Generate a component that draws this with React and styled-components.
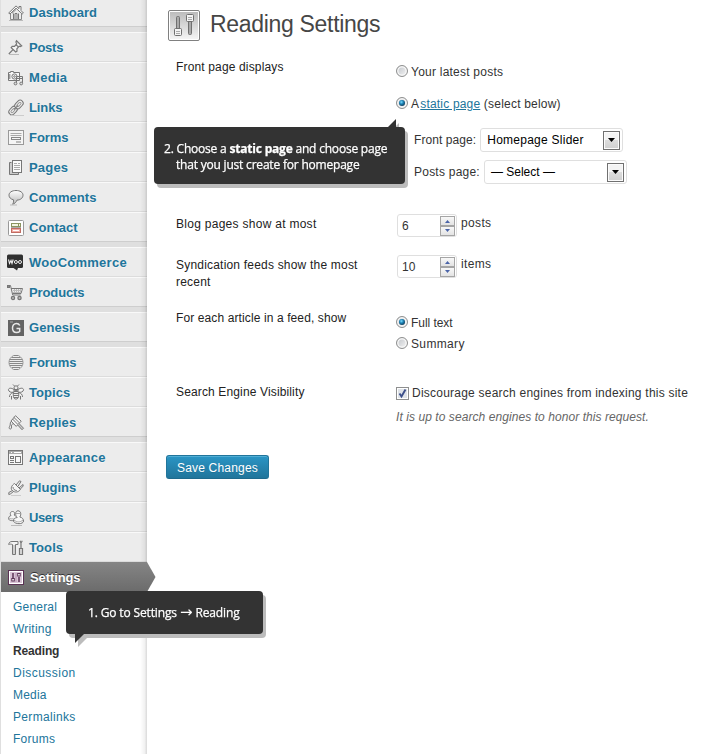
import React from 'react';
import styled, { createGlobalStyle } from 'styled-components';

const Global = createGlobalStyle`
  * { box-sizing: border-box; }
  body { margin: 0; background: #fff; color: #333; font: 12px/16px "Liberation Sans", Arial, sans-serif; overflow: hidden; }
`;

const Page = styled.div`display: flex; width: 728px; height: 754px; overflow: hidden; position: relative;`;

const Sidebar = styled.nav`
  position: relative; width: 147px; height: 754px; flex: none; background: #dfdfdf; border-left: 1px solid #dfdfdf;
  display: flex; flex-direction: column; gap: 5px;
`;
const SidebarEdge = styled.div`
  position: absolute; top: 0; right: 0; width: 7px; height: 754px;
  background: linear-gradient(to right, rgba(0,0,0,0), rgba(0,0,0,.05) 65%, rgba(0,0,0,.15));
`;
const Group = styled.div`margin-top: ${p => p.$first ? '-3px' : 0}; flex: none;`;
const Item = styled.div`
  height: 30px; display: flex; align-items: center; padding: 1px 0 0 7px; gap: 5px;
  background: #ececec; border-top: 1px solid #f9f9f9; border-bottom: 1px solid #dcdcdc;
  &:last-child { border-bottom-color: #cecece; }
  color: #21759b; font-size: 13px; font-weight: bold; letter-spacing: ${p => p.$ls || 0}px;
  text-shadow: 0 1px 0 rgba(255,255,255,.5);
`;
const Current = styled(Item)`
  position: relative; z-index: 2; color: #fff; text-shadow: 0 -1px 0 #333; border: 0;
  background: linear-gradient(#858585, #6b6b6b); gap: 6px;
`;
const CurrentArrow = styled.svg`position: absolute; left: 146px; top: 0; width: 9px; height: 30px;`;
const Icon = styled.svg`width: 16px; height: 16px; flex: none; overflow: visible; margin-top: 1px;`;
const Submenu = styled.div`height: 162px; background: #fff; padding: 4px 0 0 12px;`;
const SubItem = styled.div`
  height: 22px; line-height: 22px; letter-spacing: ${p => p.$ls}px;
  color: ${p => p.$on ? '#333' : '#21759b'}; font-weight: ${p => p.$on ? 'bold' : 'normal'};
`;

const Main = styled.main`flex: 1; padding: 9px 0 0 19px;`;
const Header = styled.header`display: flex; height: 34px; padding-left: 2px; gap: 10px;`;
const HeaderIcon = styled.svg`width: 32px; height: 32px; margin-top: 1px;`;
const Title = styled.h1`margin: 0; font-size: 23px; font-weight: normal; line-height: 30px; color: #464646; letter-spacing: -.31px;`;
const Row = styled.section`display: grid; grid-template-columns: 220px 1fr; height: ${p => p.$h}px; padding-left: 10px;`;
const Label = styled.div`color: #222; line-height: 17px; padding-top: ${p => p.$pt || 0}px;`;
const Field = styled.div`padding-top: ${p => p.$pt || 0}px;`;
const Line = styled.div`
  display: flex; align-items: center; height: ${p => p.$h}px; padding-left: ${p => p.$pl || 0}px; white-space: pre;
`;
const T = styled.span`letter-spacing: ${p => p.$ls || 0}px; white-space: pre;`;
const Unit = styled(T)`margin-top: -5px;`;
const Link = styled.a`color: #21759b; text-decoration: underline; letter-spacing: .18px;`;
const Note = styled.div`font-style: italic; color: #666; letter-spacing: .07px; line-height: 16px; padding-top: 7px;`;

const Radio = styled.span`
  width: 12px; height: 12px; border-radius: 50%; border: 1px solid #8e8f8f; margin: -2px 3px 0 0; flex: none;
  box-shadow: inset 0 0 0 1.5px #f6f6f6; display: grid; place-items: center;
  background: linear-gradient(135deg, #bfc3c8, #f6f6f6);
  &::after {
    content: ''; width: 6px; height: 6px; border-radius: 50%; display: ${p => p.$on ? 'block' : 'none'};
    background: radial-gradient(circle at 40% 35%, #7ddcff 0, #1f86b8 35%, #0b2d49 85%);
  }
`;
const Check = styled.svg`width: 13px; height: 13px; margin-right: 3px; flex: none;`;

const SelectBox = styled.div`
  width: 143px; height: 24px; border: 1px solid #dfdfdf; border-radius: 3px; margin-left: ${p => p.$ml}px;
  display: flex; align-items: center; justify-content: space-between; padding: 0 2px 0 6px; color: #000; background: #fff;
`;
const DropButton = styled.span`
  width: 17px; height: 19px; border: 1px solid #707070; background: linear-gradient(#f3f3f3 48%, #dcdcdc 50%, #cfcfcf);
  box-shadow: inset 0 0 0 1px #fbfbfb; display: grid; place-items: center;
`;
const NumberBox = styled.div`
  width: 60px; height: 23px; border: 1px solid #dfdfdf; border-radius: 3px; margin: 0 4px 0 1px;
  display: flex; align-items: center; justify-content: space-between; padding: 0 1px 0 4px;
`;
const Spinner = styled.span`display: grid; width: 15px; height: 20px;`;
const SpinButton = styled.span`
  border: 1px solid #a5a5a5; height: 10px; background: linear-gradient(#f8f8f8, #e3e3e3); display: grid; place-items: center;
`;
const Save = styled.button`
  width: 103px; height: 24px; padding: 1px 0 0; border: 1px solid #21759b; border-bottom-color: #1e6a8d; border-radius: 3px;
  background: linear-gradient(#2a95c5, #21759b); box-shadow: inset 0 1px 0 rgba(120,200,230,.5);
  color: #fff; font: 12px "Liberation Sans", Arial, sans-serif; letter-spacing: .2px; text-shadow: 0 1px 0 rgba(0,0,0,.1);
`;

const Callout = styled.div`
  position: absolute; z-index: 5; left: ${p => p.$x}px; top: ${p => p.$y}px; width: ${p => p.$w}px; height: ${p => p.$h}px;
  background: #333; border-radius: 4px; color: #fff; filter: drop-shadow(3px 4px 0 #bcbcbc);
  font: 12px/16px "Open Sans", "Noto Sans", sans-serif; padding: ${p => p.$pad}; white-space: pre;
  -webkit-text-stroke: .25px #fff;
`;
const CalloutLine = styled.div`letter-spacing: ${p => p.$ls}px; padding-left: ${p => p.$in || 0}px;`;
const Strong = styled.b`letter-spacing: -.2px;`;
const Arrow = styled.span`font: 15px/10px "DejaVu Sans", sans-serif; letter-spacing: 0; -webkit-text-stroke: 0;`;
const Tail = styled.svg`position: absolute; left: ${p => p.$x}px; top: ${p => p.$y}px; width: 10px; height: 10px;`;

const S = { fill: 'none', stroke: '#777', strokeWidth: 1 };
const icons = {
  dashboard: <g {...S}><path d="M.7 8 8 .9 11 3.7V1.5h2v4L15.4 8l-1.2 1L8 3.2 2 9Z" fill="#fafafa" /><path d="M2.5 9v5.5h11V9M8 4.5 4 8.3" stroke="#888" /><path d="M5.5 8.5V14M10.5 8.5V14M7 14V8.5h2V14" /><path d="M1 15.5h14" stroke="#bbb" /></g>,
  posts: <g {...S}><path d="m8.5.8 5.2 5-1.4.8-1.1-.4-2.3 2.600.1 2.400-1.300.800L3.200 7.600l1-1.200 2.300 0 2.200-2.600-.8-1.700Z" fill="#f5f5f5" strokeWidth="1.200" /><path d="M5 9.700.8 14M8 4.700l2.400 2.200" strokeWidth="1.200" /><path d="M1 14.500h10" stroke="#bbb" /></g>,
  media: <g {...S}><path d="M2.5 2.5v-1h3v1h6v8H.5v-8Z" fill="#f6f6f6" /><circle cx="6.5" cy="6.5" r="2.6" /><circle cx="6.5" cy="6.5" r=".8" /><path d="M1.8 4v5M8.5 13V6.5h6V13M8.5 8.5h6" /><circle cx="7.5" cy="13.5" r="1.4" fill="#ddd" /><circle cx="13.2" cy="13.5" r="1.4" fill="#ddd" /></g>,
  links: <g {...S}><g transform="rotate(-46 8 7.5)"><rect x="-1" y="4.5" width="9.5" height="6" rx="3" fill="#f5f5f5" /><rect x="1.2" y="6.4" width="5.2" height="2.2" rx="1.1" stroke="#999" /><rect x="7.5" y="4.5" width="9.5" height="6" rx="3" fill="#f5f5f5" /><rect x="9.6" y="6.4" width="5.2" height="2.2" rx="1.1" stroke="#999" /><path d="M5 7.5h6" /></g><path d="M2 15.5h14" stroke="#ccc" /></g>,
  forms: <g fill="none" stroke="#999"><rect x=".5" y=".5" width="15" height="14" fill="#f5f5f5" /><path d="M2.5 3.5h11M2.5 5.5h11" stroke="#aaa" /><rect x="3.5" y="7.5" width="9" height="2" stroke="#888" /><path d="M8 12h5" stroke="#bbb" strokeWidth="2" /></g>,
  pages: <g {...S}><path d="M3.5 2.5h-2v12h9v-2" fill="#ccc" stroke="#777" /><rect x="4.5" y=".5" width="9" height="12" fill="#fafafa" /><path d="M6 3.5h3M10 3.5h2M6 5.5h6M6 7.5h6M6 9.5h6" stroke="#aaa" /></g>,
  comments: <g {...S}><path d="M8 .5c4 0 7 1.8 7 4.7s-2.8 4.9-6 4.9c-1 2.2-2.5 3.7-4.5 4.2C5.5 13 5.8 11.5 5.5 9.8 2.8 9.2 1 7.5 1 5.2 1 2.3 4 .5 8 .5Z" fill="url(#bubble)" /><path d="M2 15h7" stroke="#bbb" /></g>,
  contact: <g fill="none"><rect x=".5" y=".5" width="15" height="15" rx="1" fill="#fff" stroke="#999" /><rect x="3.5" y="3.5" width="9" height="3" stroke="#8b9460" fill="#f3f5e4" /><path d="M10.5 3.5v3" stroke="#8b9460" /><rect x="3.5" y="8.5" width="9" height="4" stroke="#c06c62" fill="#efaaa4" /><path d="M5 10.5h6" stroke="#fff" /><path d="M3 7.5h10" stroke="#aaa" /></g>,
  woo: <g><rect x="-1" y="-.5" width="16" height="13.5" rx="1.5" fill="#303030" /><path d="M5.5 13H10l-1 2.5Z" fill="#303030" /><path d="m.5 4.500 1 4 1.500-3 1 3 1.200-4" fill="none" stroke="#eee" strokeWidth="1.1" /><circle cx="7.9" cy="7" r="1.5" fill="none" stroke="#eee" /><circle cx="12" cy="7" r="1.5" fill="none" stroke="#eee" /></g>,
  products: <g {...S}><path d="M-.5.5h3l2.200 9.500h8M3 3.500h11.500l-1.500 5H4.500" /><path d="M5 5.500h8.500M5 7.500h8M6.500 4v4M8.500 4v4M10.500 4v4M12.500 4v4" stroke="#bbb" /><rect x="-.5" y=".5" width="2" height="2" fill="#888" /><circle cx="5" cy="13" r="1.6" fill="#bbb" strokeWidth="1.3" /><circle cx="11.5" cy="13" r="1.6" fill="#bbb" strokeWidth="1.3" /></g>,
  genesis: <g><rect width="16" height="16" fill="#646464" /><path d="M11.8 5.5C11 3.9 9.9 3.5 8.5 3.5 5.900 3.500 4.500 5.500 4.500 8s1.500 4.500 4 4.500c1.300 0 2.400-.3 3.200-1V8.500H8.500" fill="none" stroke="#e8e8e8" strokeWidth="1.5" /><path d="M2 2h3" stroke="#aaa" /></g>,
  forums: <g {...S}><path d="M5.5.5h5M3.500 2.500h9M1.500 4.500h13M1 6.500h14M1 8.500h14M2 10.500h12M4 12.500h8M5.500 14.500h5" stroke="#888" /><path d="M5.5.5C3 2 1 4 1 7.500s2 5.500 4.500 7M10.500.5C13 2 15 4 15 7.500s-2 5.500-4.500 7" stroke="#999" /></g>,
  topics: <g {...S}><circle cx="8" cy="2.8" r="2" /><path d="M6.500 1 5-.5M9.500 1 11-.5" /><path d="M6 4.500C3 2.500.5 3 .5 4.800S3 8 6 7M10 4.500c3-2 5.500-1.500 5.500.3S13 8 10 7M5.500 7.500C3 8 1.500 9.500 1.500 12M10.500 7.500c2.500.5 4 2 4 4.500" fill="#f5f5f5" /><ellipse cx="8" cy="9.800" rx="2.700" ry="4.300" fill="#eee" /><path d="M5.500 8.500h5M5.500 10.500h5M6 12.500h4M6 4.500h4v2H6zM3.500 11v3.500M12.500 11v3.500" /></g>,
  replies: <g {...S}><path d="m7.500.7 5.700 5.500-5 5.200L3 6Z" fill="#f5f5f5" /><path d="m5.800 2.300 5.600 5.500M4.500 4l5.500 5.600" /><path d="m11 8.500 4.500 4.700-1.500 1.500L9.700 10" fill="#ccc" /><path d="M3 6.500C1.500 8.500 3 9.500 1.500 11.500c-1.500 3 2.500 3.500 2 .5-.5-1.500.5-3.500 2-3" /></g>,
  appearance: <g {...S}><rect x=".5" y=".5" width="14" height="14" fill="#f8f8f8" /><path d="M1 2.500h13" stroke="#aaa" strokeWidth="3" /><path d="M3 2.500h1M6 2.500h7" stroke="#fff" /><rect x="7.500" y="6.500" width="5" height="6" /><rect x="2.500" y="6.500" width="3" height="2" /><path d="M2 10.500h4M2 12.500h4" /></g>,
  plugins: <g {...S}><path d="m6.500 3.500 6 6c-2 2.700-5.500 3.500-8.200 1C2 8.500 4 5 6.500 3.500Z" fill="#f5f5f5" /><path d="m8 5 3.500-4.200 1.500.7-3 4.800M11 8l4-3.500.2 1.500-3 3.200M5 7c0 2 1.500 3.500 3.800 3.500M4.500 10.500.8 12.500l0 2 1.500-.5 3.500-2.700" /><path d="M3 15.500h10" stroke="#ccc" /></g>,
  users: <g {...S}><path d="M7.500 10C5.500 11 .5 11 .5 8.500.5 7 1.500 6 3 5.500 1.500 3.500 2.500 1.500 4.500 1.500S7 3 6.300 5l1.500 1.500" fill="#f5f5f5" /><path d="M9.200 7.500C7 5.500 7 .8 10 .8s3.500 4 1.800 6.200c2.500.5 3.700 2 3.700 4 0 3.500-8.500 3.500-10 .2C5 9 7 7.800 9.200 7.500Z" fill="#f8f8f8" /><path d="M8 3.500h4.500M6 10c3 2.500 6 2.500 9 0M1 8c2 1 3 1 4.500.5" stroke="#aaa" /><path d="M3 15.500h11" stroke="#bbb" /></g>,
  tools: <g {...S}><path d="M.7 4.500C1 2.500 2 1.500 4 1.500h6v3H7.500v10h-3v-10C3 4 2 4 .7 4.500Z" fill="#f3f3f3" /><path d="M6 5v9" stroke="#aaa" /><path d="M11.500 8.500h3v6h-3zM13 8.500V3L12 .8M13 3l1.300-2.200" strokeWidth="1.2" fill="#ddd" /></g>,
  settings: <g fill="none"><rect x=".5" y=".5" width="15" height="14" fill="#d9c4d6" stroke="#5b3355" /><rect x="1.5" y="1.5" width="13" height="12" stroke="#fff" /><path d="M5 3v5M11 7v5" stroke="#5b3355" strokeWidth="1.5" /><rect x="3.800" y="8.500" width="2.500" height="2.500" stroke="#5b3355" fill="#fff" /><rect x="9.700" y="3.500" width="2.500" height="2.500" stroke="#5b3355" fill="#fff" /><path d="M8 3v9" stroke="#b391ae" /></g>,
};

const groups = [
  [['dashboard', 'Dashboard', .02]],
  [['posts', 'Posts', -.25], ['media', 'Media', .3], ['links', 'Links', -.1], ['forms', 'Forms', -.05], ['pages', 'Pages', .2], ['comments', 'Comments', .03], ['contact', 'Contact', .05]],
  [['woo', 'WooCommerce', .25], ['products', 'Products', -.12]],
  [['genesis', 'Genesis', .05]],
  [['forums', 'Forums', -.03], ['topics', 'Topics', .06], ['replies', 'Replies', .15]],
];
const lastGroup = [['appearance', 'Appearance', .22], ['plugins', 'Plugins', .06], ['users', 'Users', -.4], ['tools', 'Tools', .1]];
const subs = [['General', .2], ['Writing', .2], ['Reading', -.15, true], ['Discussion', .47], ['Media', .2], ['Permalinks', .33], ['Forums', .28]];

const MenuItem = ({ item: [icon, name, ls] }) => <Item $ls={ls}><Icon viewBox="0 0 16 16">{icons[icon]}</Icon>{name}</Item>;

const Select = ({ children, ml, ls }) => (
  <SelectBox $ml={ml}><T $ls={ls}>{children}</T>
    <DropButton><svg width="7" height="4" viewBox="0 0 7 4"><path d="M0 0h7L3.500 4Z" fill="#000" /></svg></DropButton>
  </SelectBox>
);
const NumberInput = ({ children }) => (
  <NumberBox><span>{children}</span>
    <Spinner>
      <SpinButton><svg width="7" height="4" viewBox="0 0 7 4"><path d="M1 4h5L3.500 1Z" fill="#4a64a8" /></svg></SpinButton>
      <SpinButton><svg width="7" height="4" viewBox="0 0 7 4"><path d="M1 0h5L3.500 3Z" fill="#4a64a8" /></svg></SpinButton>
    </Spinner>
  </NumberBox>
);

export default function App() {
  return (
    <Page>
      <Global />
      <Sidebar>
        {groups.map((g, i) => <Group key={i} $first={i === 0}>{g.map(m => <MenuItem key={m[1]} item={m} />)}</Group>)}
        <Group>
          {lastGroup.map(m => <MenuItem key={m[1]} item={m} />)}
          <Current $ls={-.1}><Icon viewBox="0 0 16 16">{icons.settings}</Icon>Settings
            <CurrentArrow viewBox="0 0 9 30"><defs><linearGradient id="tip" x1="0" y1="0" x2="0" y2="1"><stop stopColor="#858585" /><stop offset="1" stopColor="#6b6b6b" /></linearGradient></defs><path d="M0 0 8.500 15 0 30Z" fill="url(#tip)" /></CurrentArrow>
          </Current>
          <Submenu>{subs.map(([n, ls, on]) => <SubItem key={n} $ls={ls} $on={on}>{n}</SubItem>)}</Submenu>
        </Group>
        <SidebarEdge />
      </Sidebar>

      <Main>
        <Header>
          <HeaderIcon viewBox="0 0 32 32">
            <defs>
              <linearGradient id="panel" x1="0" y1="0" x2="0" y2="1"><stop stopColor="#bcbcbc" /><stop offset="1" stopColor="#f4f4f4" /></linearGradient>
              <linearGradient id="bubble" x1="0" y1="0" x2="0" y2="1"><stop offset="0" stopColor="#fff" /><stop offset=".7" stopColor="#ccc" /></linearGradient>
            </defs>
            <rect x=".5" y=".5" width="31" height="30" rx="1.5" fill="#fff" stroke="#808080" />
            <rect x="2" y="2" width="28" height="27" fill="url(#panel)" />
            <g fill="#aaa" stroke="#707070"><rect x="8.500" y="6.500" width="3" height="16" rx="1" /><rect x="20.500" y="9.500" width="3" height="15" rx="1" /></g>
            <g fill="#f4f4f4" stroke="#707070"><rect x="6.500" y="18.500" width="7" height="7" rx="1" /><rect x="18.500" y="4.500" width="7" height="7" rx="1" /></g>
            <path d="M8 21.500h4M8 23.500h4M20 7.500h4M20 9.500h4" stroke="#aaa" />
          </HeaderIcon>
          <Title>Reading Settings</Title>
        </Header>

        <Row $h={161}>
          <Label $pt={16}><T $ls={.15}>Front page displays</T></Label>
          <Field $pt={20}>
            <Line $h={17}><Radio /><T $ls={.23}>Your latest posts</T></Line>
            <Line $h={48}><Radio $on /><T $ls={-.7}>A </T><Link>static page</Link><T $ls={.21}>{' (select below)'}</T></Line>
            <Line $h={24} $pl={18}><T $ls={.08}>Front page:</T><Select ml={4} ls={.25}>Homepage Slider</Select></Line>
            <Line $h={40} $pl={18}><T $ls={.23}>Posts page:</T><Select ml={4}>— Select —</Select></Line>
          </Field>
        </Row>
        <Row $h={41}>
          <Label $pt={12}><T $ls={.28}>Blog pages show at most</T></Label>
          <Field $pt={10}><Line $h={23}><NumberInput>6</NumberInput><Unit $ls={.35}>posts</Unit></Line></Field>
        </Row>
        <Row $h={57}>
          <Label $pt={12}><T $ls={.2}>Syndication feeds show the most</T><br /><T $ls={.2}>recent</T></Label>
          <Field $pt={10}><Line $h={23}><NumberInput>10</NumberInput><Unit $ls={.35}>items</Unit></Line></Field>
        </Row>
        <Row $h={74}>
          <Label $pt={8}><T $ls={.11}>For each article in a feed, show</T></Label>
          <Field $pt={10}>
            <Line $h={21}><Radio $on /><T $ls={-.05}>{' Full text'.trim()}</T></Line>
            <Line $h={21}><Radio /><T $ls={.35}>Summary</T></Line>
          </Field>
        </Row>
        <Row $h={79}>
          <Label $pt={8}><T $ls={.14}>Search Engine Visibility</T></Label>
          <Field $pt={8}>
            <Line $h={18}><Check viewBox="0 0 13 13"><rect x=".5" y=".5" width="12" height="12" fill="#fff" stroke="#8e8f8f" /><rect x="2" y="2" width="9" height="9" fill="#dfe3e8" /><path d="m3.500 6.500 2 3 4-7" fill="none" stroke="#3c4f8a" strokeWidth="1.9" /></Check><T $ls={.23}>Discourage search engines from indexing this site</T></Line>
            <Note>It is up to search engines to honor this request.</Note>
          </Field>
        </Row>
        <Save>Save Changes</Save>
      </Main>

      <Callout $x={154} $y={127} $w={251} $h={57} $pad="14px 0 0 10px">
        <CalloutLine $ls={-.2}>2. Choose a <Strong>static page</Strong> and choose page</CalloutLine>
        <CalloutLine $ls={-.2} $in={12}>that you just create for homepage</CalloutLine>
        <Tail $x={233} $y={-8} viewBox="0 0 10 10"><path d="M0 9 9 0v9Z" fill="#333" /></Tail>
      </Callout>
      <Callout $x={66} $y={591} $w={197} $h={43} $pad="14px 0 0 22px">
        <CalloutLine $ls={-.14}>1. Go to Settings <Arrow>→</Arrow> Reading</CalloutLine>
        <Tail $x={9} $y={42} viewBox="0 0 10 10"><path d="M0 0h10L0 10Z" fill="#333" /></Tail>
      </Callout>
    </Page>
  );
}
